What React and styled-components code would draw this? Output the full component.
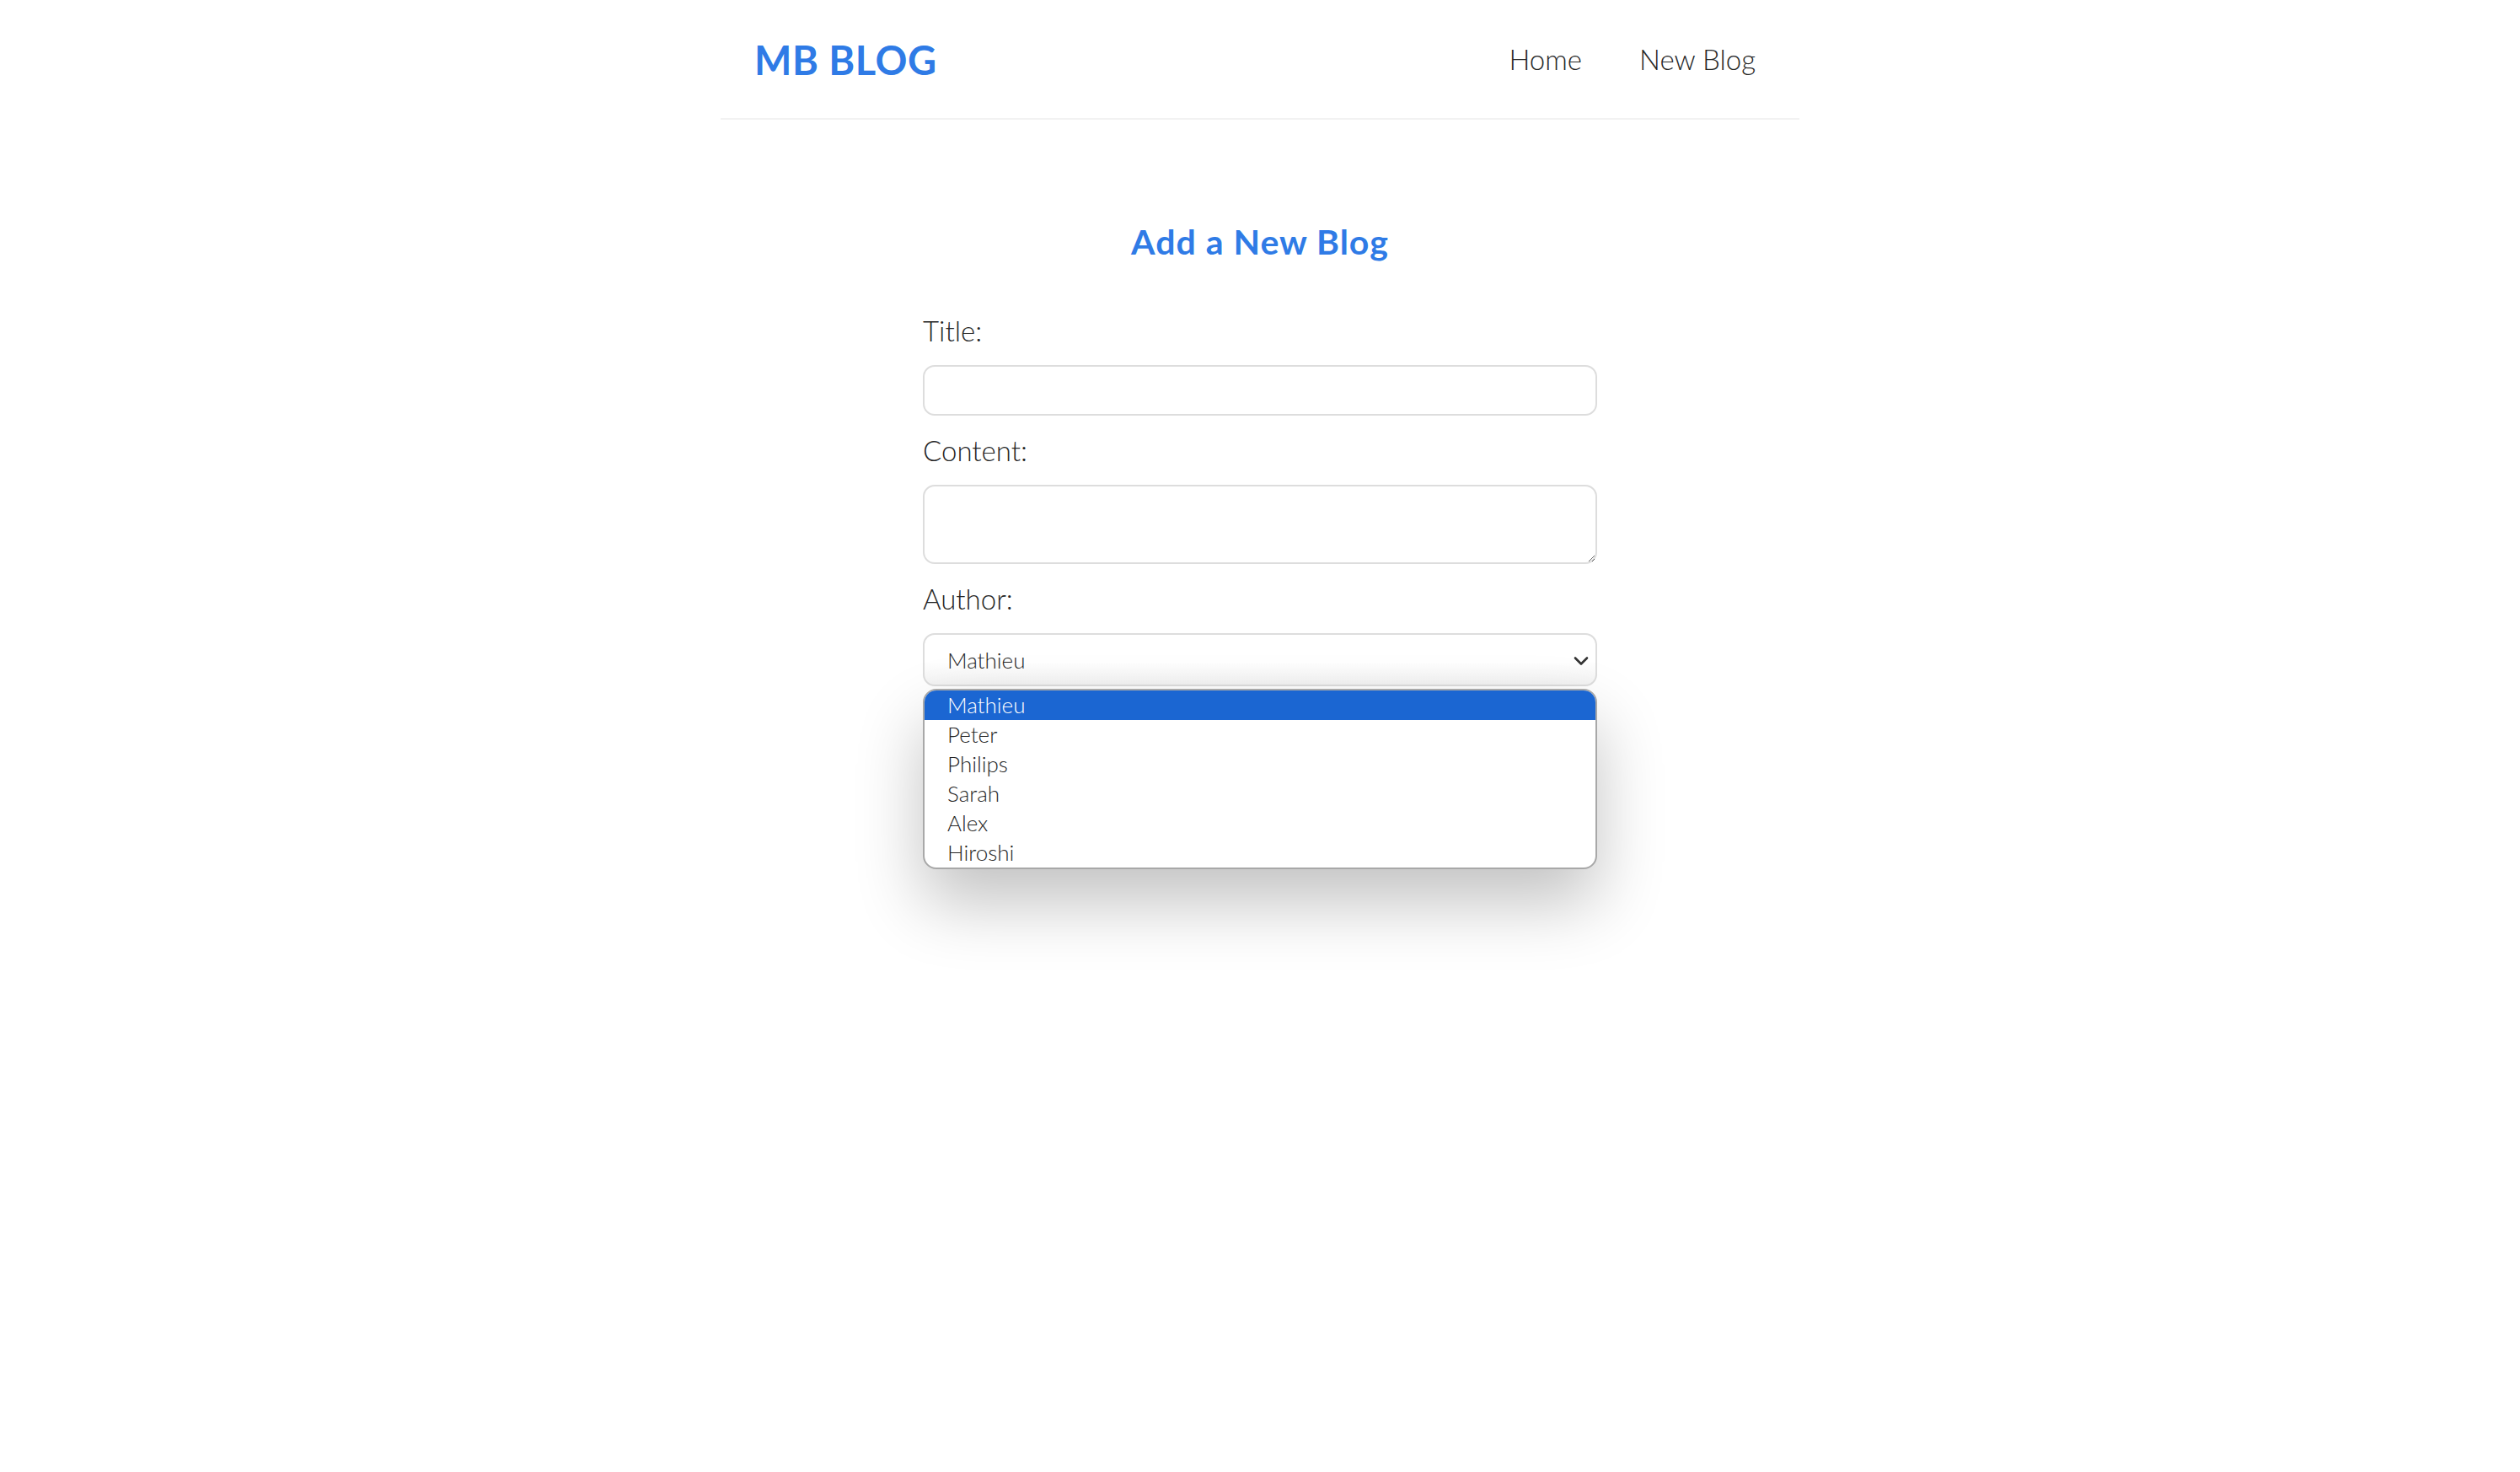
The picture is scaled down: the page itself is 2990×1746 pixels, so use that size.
import React from "react";
import styled, { createGlobalStyle } from "styled-components";

const FONT = `"Lato", "Noto Sans", "DejaVu Sans", sans-serif`;
const BLUE = "#2f7be6";
const INK = "#262626";

const Global = createGlobalStyle`
  * { margin: 0; box-sizing: border-box; }
  html, body { background: #fff; }
  body { margin: 0; min-height: 100vh; font-family: ${FONT}; color: ${INK}; }
  #root { min-height: 100vh; }
`;

const Page = styled.div`
  min-height: 100vh;
`;

const Nav = styled.nav`
  max-width: 1280px;
  height: 142px;
  margin: 0 auto;
  padding: 0 40px;
  display: flex;
  align-items: center;
  border-bottom: 2px solid #f2f2f2;
`;

const Logo = styled.h1`
  font-size: 47px;
  font-weight: 700;
  color: ${BLUE};
  letter-spacing: 0.5px;
  padding-top: 2px;
`;

const Links = styled.div`
  margin-left: auto;
  display: flex;
  align-items: center;
`;

const NavLink = styled.a`
  margin-left: 44px;
  padding: 12px;
  font-size: 33px;
  font-weight: 300;
  color: ${INK};
  text-decoration: none;
`;

const Content = styled.main`
  max-width: 1280px;
  margin: 80px auto 0;
  padding: 40px;
`;

const Create = styled.div`
  max-width: 800px;
  margin: 0 auto;
  text-align: center;
  position: relative;
`;

const Heading = styled.h2`
  font-size: 41px;
  line-height: 49px;
  font-weight: 700;
  color: ${BLUE};
  margin-bottom: 60px;
  letter-spacing: 1px;
`;

const Form = styled.form`
  display: flex;
  flex-direction: column;
  text-align: left;
`;

const Label = styled.label`
  display: block;
  font-size: 33px;
  line-height: 42px;
  font-weight: 300;
  color: ${INK};
`;

const fieldBase = `
  width: 100%;
  margin: 20px 0;
  border: 2px solid #dddddd;
  border-radius: 14px;
  background: #fff;
  display: block;
  font-family: ${FONT};
  color: ${INK};
  outline: none;
`;

const TextInput = styled.input`
  ${fieldBase}
  height: 60px;
  padding: 12px 20px;
  font-size: 26px;
`;

const TextArea = styled.textarea`
  ${fieldBase}
  height: 94px;
  padding: 12px 20px;
  font-size: 26px;
  resize: vertical;
`;

const SelectWrap = styled.div`
  position: relative;
  margin: 20px 0 0;
`;

const Select = styled.select`
  ${fieldBase}
  margin: 0;
  height: 63px;
  padding: 0 60px 0 27px;
  font-size: 26px;
  font-weight: 300;
  appearance: none;
  -webkit-appearance: none;
  background: linear-gradient(#ffffff 55%, #f3f3f3);
`;

const Chevron = styled.svg`
  position: absolute;
  right: 10px;
  top: 27px;
  width: 18px;
  height: 12px;
  pointer-events: none;
`;

const Dropdown = styled.ul`
  position: absolute;
  left: 0;
  right: 0;
  top: 66px;
  list-style: none;
  padding: 0;
  margin: 0;
  background: #fff;
  border: 2px solid #a8a8a8;
  border-radius: 16px;
  overflow: hidden;
  box-shadow: 0 40px 80px rgba(0, 0, 0, 0.24);
  z-index: 5;
`;

const Option = styled.li`
  height: 35px;
  line-height: 35px;
  padding-left: 27px;
  font-size: 26px;
  font-weight: 300;
  color: ${(p) => (p.$active ? "#fff" : INK)};
  background: ${(p) => (p.$active ? "#1b66d2" : "transparent")};
`;

const authors = ["Mathieu", "Peter", "Philips", "Sarah", "Alex", "Hiroshi"];

export default function App() {
  return (
    <Page>
      <Global />
      <Nav>
        <Logo>MB BLOG</Logo>
        <Links>
          <NavLink href="#">Home</NavLink>
          <NavLink href="#">New Blog</NavLink>
        </Links>
      </Nav>
      <Content>
        <Create>
          <Heading>Add a New Blog</Heading>
          <Form onSubmit={(e) => e.preventDefault()}>
            <Label>Title:</Label>
            <TextInput type="text" />
            <Label>Content:</Label>
            <TextArea />
            <Label>Author:</Label>
            <SelectWrap>
              <Select defaultValue="Mathieu">
                {authors.map((a) => (
                  <option key={a} value={a}>
                    {a}
                  </option>
                ))}
              </Select>
              <Chevron viewBox="0 0 18 12">
                <path
                  d="M2 2.5 L9 9.5 L16 2.5"
                  fill="none"
                  stroke="#333"
                  strokeWidth="2.6"
                  strokeLinecap="round"
                  strokeLinejoin="round"
                />
              </Chevron>
              <Dropdown>
                {authors.map((a, i) => (
                  <Option key={a} $active={i === 0}>
                    {a}
                  </Option>
                ))}
              </Dropdown>
            </SelectWrap>
          </Form>
        </Create>
      </Content>
    </Page>
  );
}
